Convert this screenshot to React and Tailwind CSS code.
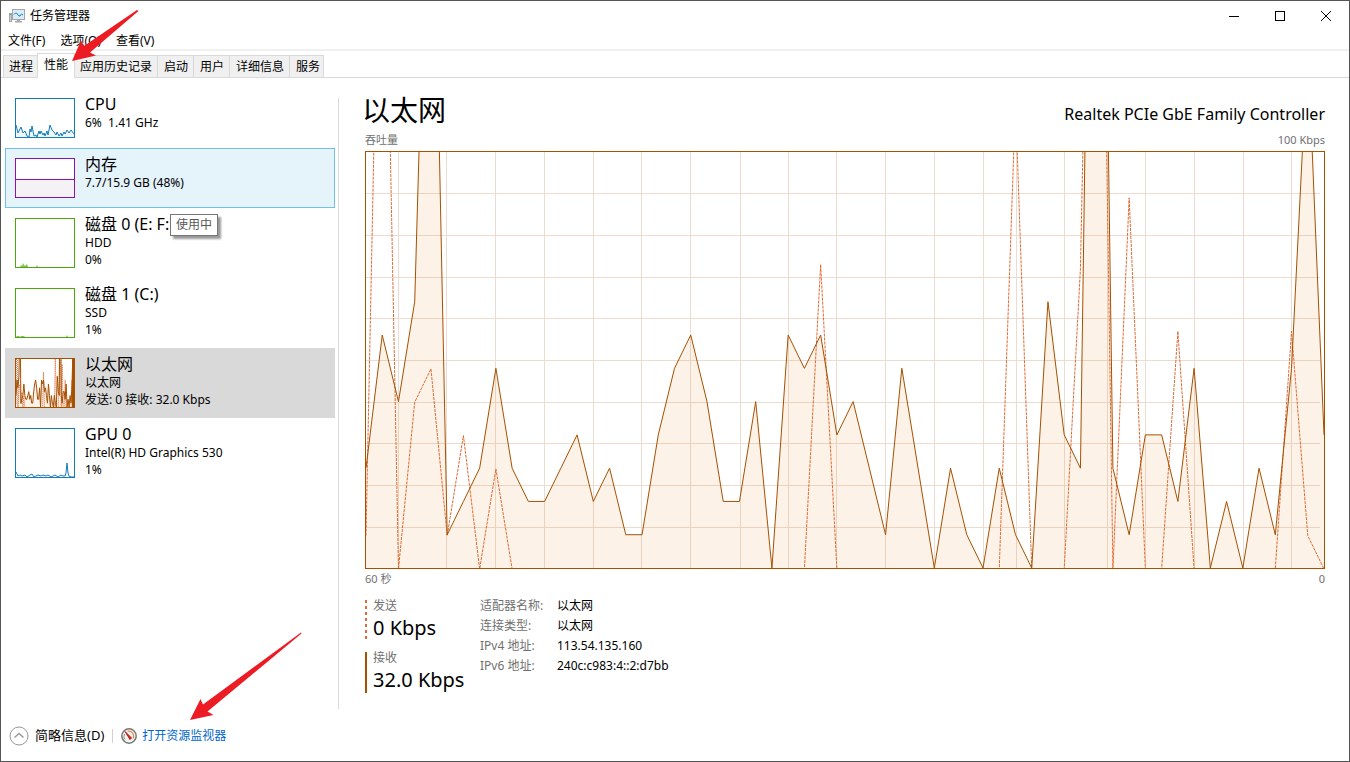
import { useState } from "react";

const received = [
  24, 56, 40, 64, 200, 8, 16, 24, 48, 24, 16, 16, 24, 32, 16, 24, 8, 8, 32, 48,
  56, 40, 16, 16, 40, 0, 56, 48, 56, 32, 40, 24, 8, 48, 24, 0, 24, 8, 0, 24,
  8, 0, 64, 32, 24, 300, 24, 8, 32, 32, 16, 48, 0, 16, 0, 24, 8, 48, 126, 32,
];

const sent = [
  8, 200, 0, 40, 48, 8, 32, 0, 24, 0, 0, 0, 0, 0, 0, 0, 0, 0, 0, 0,
  0, 0, 0, 0, 0, 0, 0, 0, 73, 0, 0, 0, 0, 0, 0, 0, 0, 0, 0, 0,
  112, 0, 0, 0, 72, 260, 0, 89, 0, 0, 57, 0, 0, 0, 0, 0, 0, 57, 8, 0,
];

const gridX = [
  32, 80, 129, 178, 227, 275, 324, 374, 422, 470, 519, 568, 617, 650, 698, 741,
  779, 828, 877, 925,
];
const gridY = [41, 83, 125, 166, 208, 250, 291, 333, 375];

const toPoints = (values, width, height) =>
  values
    .map((v, i) => `${(i * width) / (values.length - 1)},${height - (v * height) / 100}`)
    .join(" ");

function ThroughputChart() {
  const line = toPoints(received, 958, 416);
  return (
    <svg
      viewBox="0 0 958 416"
      preserveAspectRatio="none"
      className="block h-[418px] w-full overflow-hidden border border-[#a65000] bg-white"
      role="img"
      aria-label="吞吐量"
    >
      <g stroke="#ebdccf" strokeWidth="1">
        {gridX.map((x) => (
          <line
            key={x}
            x1={x + 0.5}
            x2={x + 0.5}
            y1="0"
            y2="416"
            vectorEffect="non-scaling-stroke"
          />
        ))}
        {gridY.map((y) => (
          <line
            key={y}
            x1="0"
            x2="954"
            y1={y + 0.5}
            y2={y + 0.5}
            vectorEffect="non-scaling-stroke"
          />
        ))}
      </g>
      <polygon points={`0,416 ${line} 958,416`} fill="#e28c28" fillOpacity="0.11" />
      <polyline
        points={toPoints(sent, 958, 417)}
        fill="none"
        stroke="#dd6b35"
        strokeDasharray="3 1"
        vectorEffect="non-scaling-stroke"
      />
      <polyline
        points={line}
        fill="none"
        stroke="#a65000"
        vectorEffect="non-scaling-stroke"
      />
    </svg>
  );
}

function CpuThumb() {
  const line =
    "0,26 2,34 5,28 7,34 9,32 11,37 13,38 14,30 15,33 16,27 18,37 20,36 21,38 23,32 24,35 25,32 27,36 28,34 29,37 31,32 32,36 34,26 36,31 38,33 40,36 41,33 43,37 45,34 46,37 48,33 49,35 51,31 53,34 55,31 58,35";
  return (
    <svg viewBox="0 0 58 38" className="h-10 w-[60px] shrink-0 border border-[#117dbb] bg-white">
      <polygon points={`0,38 ${line} 58,38`} fill="#f1f6fa" />
      <polyline points={line} fill="none" stroke="#117dbb" />
    </svg>
  );
}

function MemoryThumb() {
  return (
    <svg viewBox="0 0 58 38" className="h-10 w-[60px] shrink-0 border border-[#8b12ae] bg-white">
      <rect y="20" width="58" height="18" fill="#f4f2f4" />
      <path d="M0 20.5H58" stroke="#8b12ae" />
    </svg>
  );
}

function DiskThumb({ line }) {
  return (
    <svg viewBox="0 0 58 48" className="h-[50px] w-[60px] shrink-0 border border-[#4da60c] bg-white">
      <polygon points={line} fill="#4da60c" fillOpacity="0.7" />
    </svg>
  );
}

function EthernetThumb() {
  const line = toPoints(received, 58, 48);
  return (
    <svg viewBox="0 0 58 48" className="h-[50px] w-[60px] shrink-0 border border-[#a65000] bg-white">
      <polygon points={`0,48 ${line} 58,48`} fill="#fcf3eb" />
      <polyline points={toPoints(sent, 58, 49)} fill="none" stroke="#dd6b35" strokeDasharray="1 1" />
      <polyline points={line} fill="none" stroke="#a65000" />
      <path d="M57 0V48" stroke="#a65000" strokeWidth="2" />
    </svg>
  );
}

function GpuThumb() {
  const line =
    "0,43 1,45 2,47 4,46 6,47 9,46 11,48 14,46 16,45 18,48 22,46 25,47 27,46 30,47 32,46 35,48 39,46 42,48 45,46 47,47 49,47 50,44 51,34 52,44 53,47 55,48 58,48";
  return (
    <svg viewBox="0 0 58 48" className="h-[50px] w-[60px] shrink-0 border border-[#117dbb] bg-white">
      <polyline points={line} fill="none" stroke="#117dbb" />
    </svg>
  );
}

function TaskManagerIcon() {
  return (
    <svg viewBox="0 0 16 16" className="size-4" aria-hidden="true">
      <rect x="0.5" y="5.5" width="2" height="8" fill="#c9cdd0" stroke="#a3a8ab" />
      <path d="M1 6.5h1" stroke="#35b22c" />
      <rect x="3.500" y="1.500" width="12" height="10" fill="#e6e9eb" stroke="#a0a6ab" />
      <rect x="5" y="3" width="9" height="7" fill="#d5eefb" />
      <path d="M5 6.500l1.500-1.500h1L10 8h1l1.500-2 1.500 1" fill="none" stroke="#1c7db8" />
      <path d="M8 12h3v1h2v1.500H6V13h2z" fill="#a5aaae" />
    </svg>
  );
}

function MonitorIcon() {
  return (
    <svg viewBox="0 0 16 16" className="size-4" aria-hidden="true">
      <circle cx="8" cy="8" r="7.200" fill="#f6f6f3" stroke="#777" strokeWidth="1.500" />
      <path d="M4 11.500a5 5 0 0 1-.5-5.500" fill="none" stroke="#8a8a8a" />
      <path d="M6.500 3.200a5 5 0 0 1 5.500 7.300" fill="none" stroke="#e88a4a" strokeWidth="1.200" />
      <path d="M4 3.500L10.500 10 9 11.500z" fill="#c8161d" stroke="#c8161d" />
    </svg>
  );
}

const tabs = ["进程", "性能", "应用历史记录", "启动", "用户", "详细信息", "服务"];

const resources = [
  { title: "CPU", lines: ["6%  1.41 GHz"], thumb: <CpuThumb /> },
  { title: "内存", lines: ["7.7/15.9 GB (48%)"], thumb: <MemoryThumb /> },
  {
    title: "磁盘 0 (E: F:)",
    lines: ["HDD", "0%"],
    thumb: <DiskThumb line="4,48 5,46 6,47 7,44 8,46 9,47 11,45 12,48 20,48 21,46 22,48" />,
  },
  {
    title: "磁盘 1 (C:)",
    lines: ["SSD", "1%"],
    thumb: <DiskThumb line="0,48 1,47 3,47 4,48 5,47 8,47 9,48 50,48 51,46 52,48" />,
  },
  {
    title: "以太网",
    lines: ["以太网", "发送: 0 接收: 32.0 Kbps"],
    thumb: <EthernetThumb />,
  },
  { title: "GPU 0", lines: ["Intel(R) HD Graphics 530", "1%"], thumb: <GpuThumb /> },
];

const details = [
  ["适配器名称:", "以太网"],
  ["连接类型:", "以太网"],
  ["IPv4 地址:", "113.54.135.160"],
  ["IPv6 地址:", "240c:c983:4::2:d7bb"],
];

function TitleBar() {
  return (
    <header className="flex h-[30px] items-center pl-2">
      <TaskManagerIcon />
      <h1 className="flex-1 pl-[5px] leading-4">任务管理器</h1>
      <div className="flex h-full">
        <button aria-label="最小化" className="flex w-[46px] items-center justify-center">
          <svg viewBox="0 0 10 10" className="size-[10px]">
            <path d="M0 5.500H10" stroke="#000" />
          </svg>
        </button>
        <button aria-label="最大化" className="flex w-[46px] items-center justify-center">
          <svg viewBox="0 0 10 10" className="size-[10px]">
            <rect x="0.5" y="0.5" width="9" height="9" fill="none" stroke="#000" />
          </svg>
        </button>
        <button aria-label="关闭" className="flex w-[46px] items-center justify-center">
          <svg viewBox="0 0 10 10" className="size-[10px]">
            <path d="M0 0L10 10M10 0L0 10" stroke="#000" />
          </svg>
        </button>
      </div>
    </header>
  );
}

function TabStrip({ active, onChange }) {
  return (
    <div role="tablist" className="flex items-end border-b border-[#d9d9d9] pl-[2px]">
      {tabs.map((tab, i) => (
        <button
          key={tab}
          role="tab"
          aria-selected={i === active}
          onClick={() => onChange(i)}
          className={
            i === active
              ? "-mb-px h-[25px] border border-b-0 border-[#d9d9d9] bg-white px-[6px] pb-[2px]"
              : "h-[22px] border border-r-0 border-b-0 border-[#d9d9d9] bg-[#f0f0f0] pr-[5px] pl-[6px] first:pr-1 first:pl-[5px] last:border-r last:pr-[3px] nth-[3]:border-l-0 nth-[3]:pl-[5px]"
          }
        >
          {tab}
        </button>
      ))}
    </div>
  );
}

function ResourceItem({ item, index, selected, onSelect }) {
  const state = selected
    ? "border-[#d9d9d9] bg-[#d9d9d9]"
    : index === 1
      ? "border-[#70c0e7] bg-[#e5f3fb]"
      : "border-transparent";
  return (
    <button
      onClick={onSelect}
      aria-pressed={selected}
      className={`flex w-full gap-[10px] border px-[9px] pt-[9px] pb-[9px] text-left ${state}`}
    >
      {item.thumb}
      <span className="-mt-1 -mb-1 block min-w-0">
        <span className="block text-base leading-5">{item.title}</span>
        {item.lines.map((line) => (
          <span key={line} className="block leading-[17px] whitespace-pre">
            {line}
          </span>
        ))}
      </span>
    </button>
  );
}

function Speed({ label, value, bar }) {
  return (
    <div className="flex gap-[6px]">
      {bar}
      <div>
        <div className="leading-4 text-[#707070]">{label}</div>
        <div className="text-xl leading-7">{value}</div>
      </div>
    </div>
  );
}

export default function App() {
  const [tab, setTab] = useState(1);
  const [selected, setSelected] = useState(4);

  return (
    <div className="relative flex min-h-screen flex-col border border-[#555] bg-white font-['Noto_Sans','Noto_Sans_CJK_SC',sans-serif] text-xs text-black">
      <TitleBar />

      <nav className="flex h-5 items-center gap-[15px] border-b-2 border-[#f0f0f0] pt-[2px] pl-[7px]">
        <button>文件(F)</button>
        <button>选项(O)</button>
        <button>查看(V)</button>
      </nav>

      <div className="pt-[2px]">
        <TabStrip active={tab} onChange={setTab} />
      </div>

      <main className="flex flex-1">
        <aside className="w-[334px] shrink-0 pt-[10px] pl-1">
          {resources.map((item, i) => (
            <div key={item.title} className="relative">
              <ResourceItem
                item={item}
                index={i}
                selected={selected === i}
                onSelect={() => setSelected(i)}
              />
              {i === 1 && (
                <div
                  role="tooltip"
                  className="absolute top-[66px] left-[165px] z-10 border border-[#767676] bg-white px-[5px] leading-5 text-[#575757] shadow-[3px_3px_2px_rgba(0,0,0,0.4)]"
                >
                  使用中
                </div>
              )}
            </div>
          ))}
        </aside>

        <div className="mt-5 mb-[2px] ml-[3px] w-px bg-[#dadada]" />

        <section className="min-w-0 flex-1 pt-3 pr-6 pl-[26px]">
          <div className="-ml-[3px] flex items-center justify-between">
            <h2 className="text-[28px] leading-10">以太网</h2>
            <div className="pt-2 text-base leading-5">Realtek PCIe GbE Family Controller</div>
          </div>
          <div className="flex justify-between pt-px pb-[2px] text-[11px] leading-[18px] text-[#707070]">
            <span>吞吐量</span>
            <span>100 Kbps</span>
          </div>
          <ThroughputChart />
          <div className="flex justify-between pt-px text-[11px] leading-[18px] text-[#707070]">
            <span>60 秒</span>
            <span>0</span>
          </div>

          <div className="flex pt-[10px]">
            <div className="flex w-[115px] flex-col gap-2">
              <Speed
                label="发送"
                value="0 Kbps"
                bar={
                  <svg viewBox="0 0 2 40" className="mt-[2px] h-10 w-[2px]" aria-hidden="true">
                    <path d="M1 0V40" stroke="#dd6b35" strokeWidth="2" strokeDasharray="3 3" />
                  </svg>
                }
              />
              <Speed
                label="接收"
                value="32.0 Kbps"
                bar={<div className="mt-[2px] h-[41px] w-[2px] bg-[#a65000]" />}
              />
            </div>
            <table className="self-start text-left">
              <tbody>
                {details.map(([name, value]) => (
                  <tr key={name} className="h-5 align-top">
                    <th scope="row" className="w-[77px] p-0 leading-4 font-normal text-[#707070]">
                      {name}
                    </th>
                    <td className="p-0 leading-4">{value}</td>
                  </tr>
                ))}
              </tbody>
            </table>
          </div>
        </section>
      </main>

      <footer className="flex h-[50px] items-center pl-2">
        <button className="flex items-center gap-[6px] text-[13px]">
          <svg viewBox="0 0 20 20" className="size-5" fill="none" aria-hidden="true">
            <circle cx="10" cy="10" r="9" stroke="#999" />
            <path d="M5.500 11.500L10 7.500l4.500 4" stroke="#999" strokeWidth="1.500" />
          </svg>
          简略信息(D)
        </button>
        <div className="ml-2 h-[14px] w-px bg-[#d0d0d0]" />
        <a href="#monitor" className="flex items-center gap-[5px] pl-2 text-[#0066cc]">
          <MonitorIcon />
          打开资源监视器
        </a>
      </footer>

      {/* red pointer arrows over the tab and the monitor link */}
      <svg
        viewBox="0 0 68 54"
        className="pointer-events-none absolute top-2 left-[70px] h-[54px] w-[68px]"
        aria-hidden="true"
      >
        <path d="M1 52L10 31.500 13 37 66 1 67.500 2 19 43.500 25 46.500z" fill="#ed1c24" />
      </svg>
      <svg
        viewBox="0 0 114 90"
        className="pointer-events-none absolute bottom-10 left-[188px] h-[90px] w-[114px]"
        aria-hidden="true"
      >
        <path d="M1 89L11.500 68 14 73.500 112 1.500 112.500 2.500 18.500 80.500 24.500 84z" fill="#ed1c24" />
      </svg>
    </div>
  );
}
